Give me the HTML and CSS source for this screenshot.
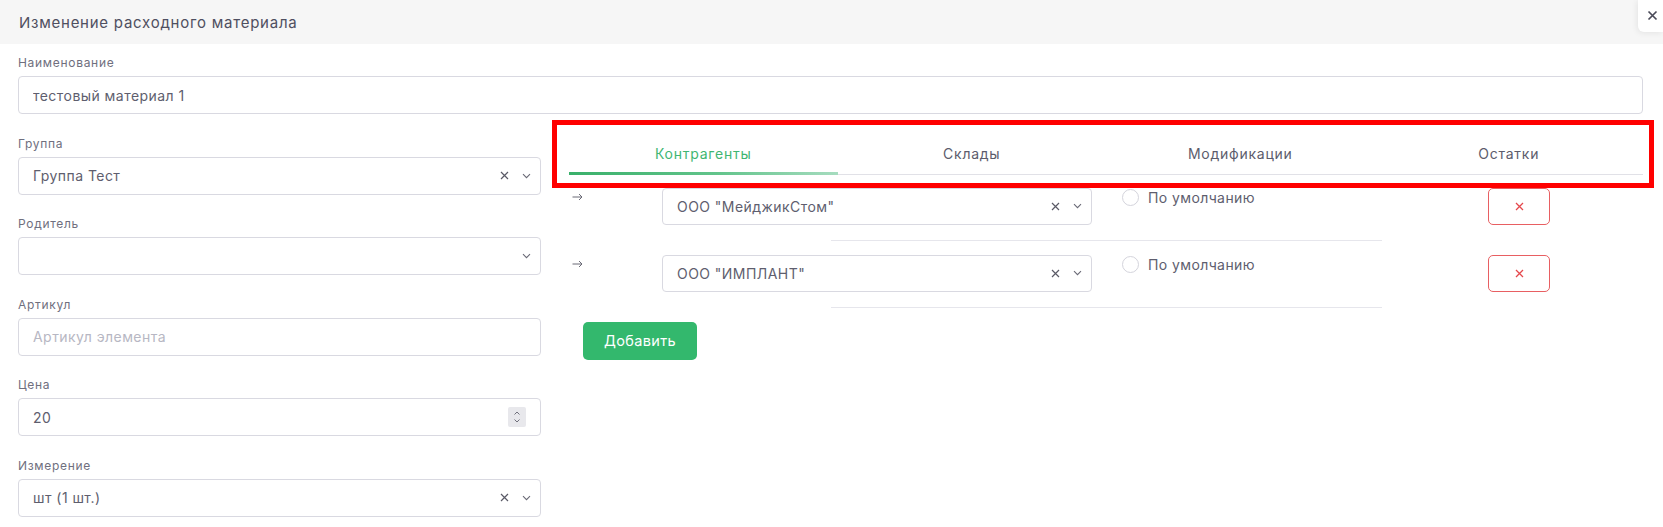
FILE: index.html
```html
<!DOCTYPE html>
<html lang="ru">
<head>
<meta charset="utf-8">
<title>Изменение расходного материала</title>
<link rel="stylesheet" href="styles.css">
</head>
<body>
<div class="modal">
  <header class="modal-head">
    <h1 class="modal-title">Изменение расходного материала</h1>
  </header>
  <button class="modal-close" type="button" aria-label="Закрыть">
    <svg width="11" height="11" viewBox="0 0 11 11"><path d="M1.5 1.5l8 8M9.5 1.5l-8 8" stroke="#4a4a58" stroke-width="1.7" fill="none"/></svg>
  </button>

  <div class="modal-body">
    <div class="field">
      <div class="field-label">Наименование</div>
      <div class="control"><span class="control-value">тестовый материал 1</span></div>
    </div>

    <div class="layout">
      <div class="col-left">
        <div class="field">
          <div class="field-label">Группа</div>
          <div class="control select">
            <span class="control-value">Группа Тест</span>
            <span class="icon-clear"><svg width="9" height="9" viewBox="0 0 9 9"><path d="M1 1l7 7M8 1L1 8" stroke="#5a5a66" stroke-width="1.2" fill="none"/></svg></span>
            <span class="icon-chevron"><svg width="9" height="6" viewBox="0 0 9 6"><path d="M1 1.2l3.5 3.5L8 1.2" stroke="#6a6a76" stroke-width="1.1" fill="none"/></svg></span>
          </div>
        </div>
        <div class="field">
          <div class="field-label">Родитель</div>
          <div class="control select">
            <span class="control-value"></span>
            <span class="icon-chevron"><svg width="9" height="6" viewBox="0 0 9 6"><path d="M1 1.2l3.5 3.5L8 1.2" stroke="#6a6a76" stroke-width="1.1" fill="none"/></svg></span>
          </div>
        </div>
        <div class="field">
          <div class="field-label">Артикул</div>
          <div class="control"><span class="control-value placeholder">Артикул элемента</span></div>
        </div>
        <div class="field">
          <div class="field-label">Цена</div>
          <div class="control">
            <span class="control-value">20</span>
            <span class="spinner">
              <svg width="18" height="20" viewBox="0 0 18 20"><path d="M6.5 7.5l2.5-2.5 2.5 2.5M6.5 12.5l2.5 2.5 2.5-2.5" stroke="#70707c" stroke-width="1" fill="none"/></svg>
            </span>
          </div>
        </div>
        <div class="field">
          <div class="field-label">Измерение</div>
          <div class="control select">
            <span class="control-value">шт (1 шт.)</span>
            <span class="icon-clear"><svg width="9" height="9" viewBox="0 0 9 9"><path d="M1 1l7 7M8 1L1 8" stroke="#5a5a66" stroke-width="1.2" fill="none"/></svg></span>
            <span class="icon-chevron"><svg width="9" height="6" viewBox="0 0 9 6"><path d="M1 1.2l3.5 3.5L8 1.2" stroke="#6a6a76" stroke-width="1.1" fill="none"/></svg></span>
          </div>
        </div>
      </div>

      <div class="col-right">
        <div class="tabs-frame">
          <nav class="tabs">
            <a class="tab is-active">Контрагенты</a>
            <a class="tab">Склады</a>
            <a class="tab">Модификации</a>
            <a class="tab">Остатки</a>
          </nav>
        </div>

        <div class="suppliers">
          <div class="supplier-row">
            <span class="row-arrow"><svg width="11" height="8" viewBox="0 0 11 8"><path d="M0.5 4h9.5M7 1l3 3-3 3" stroke="#6a6a76" stroke-width="1" fill="none"/></svg></span>
            <div class="control select">
              <span class="control-value">ООО "МейджикСтом"</span>
              <span class="icon-clear"><svg width="9" height="9" viewBox="0 0 9 9"><path d="M1 1l7 7M8 1L1 8" stroke="#5a5a66" stroke-width="1.2" fill="none"/></svg></span>
              <span class="icon-chevron"><svg width="9" height="6" viewBox="0 0 9 6"><path d="M1 1.2l3.5 3.5L8 1.2" stroke="#6a6a76" stroke-width="1.1" fill="none"/></svg></span>
            </div>
            <label class="radio"><span class="radio-dot"></span>По умолчанию</label>
            <button class="btn-remove" type="button"><svg width="9" height="9" viewBox="0 0 9 9"><path d="M1 1l7 7M8 1L1 8" stroke="#e5484d" stroke-width="1.3" fill="none"/></svg></button>
          </div>
          <hr class="row-sep">
          <div class="supplier-row">
            <span class="row-arrow"><svg width="11" height="8" viewBox="0 0 11 8"><path d="M0.5 4h9.5M7 1l3 3-3 3" stroke="#6a6a76" stroke-width="1" fill="none"/></svg></span>
            <div class="control select">
              <span class="control-value">ООО "ИМПЛАНТ"</span>
              <span class="icon-clear"><svg width="9" height="9" viewBox="0 0 9 9"><path d="M1 1l7 7M8 1L1 8" stroke="#5a5a66" stroke-width="1.2" fill="none"/></svg></span>
              <span class="icon-chevron"><svg width="9" height="6" viewBox="0 0 9 6"><path d="M1 1.2l3.5 3.5L8 1.2" stroke="#6a6a76" stroke-width="1.1" fill="none"/></svg></span>
            </div>
            <label class="radio"><span class="radio-dot"></span>По умолчанию</label>
            <button class="btn-remove" type="button"><svg width="9" height="9" viewBox="0 0 9 9"><path d="M1 1l7 7M8 1L1 8" stroke="#e5484d" stroke-width="1.3" fill="none"/></svg></button>
          </div>
          <hr class="row-sep">
        </div>

        <button class="btn-add" type="button">Добавить</button>
      </div>
    </div>
  </div>
</div>
</body>
</html>
```

FILE: styles.css
```css
* { box-sizing: border-box; }

html, body {
  margin: 0;
  padding: 0;
  background: #ffffff;
}

body {
  font-family: Inter, "Noto Sans", sans-serif;
  color: #5e5e6e;
}

.modal {
  position: relative;
  width: 1663px;
  min-height: 527px;
  background: #fff;
}

/* header strip */
.modal-head {
  height: 44px;
  background: #f6f6f6;
  display: flex;
  align-items: center;
  padding-left: 19px;
}

.modal-title {
  margin: 0;
  font-size: 15px;
  font-weight: 400;
  letter-spacing: 0.75px;
  color: #4f4f60;
}

.modal-close {
  position: absolute;
  top: 0;
  right: 0;
  width: 25px;
  height: 32px;
  border: 0;
  padding: 0 0 2px 4px;
  background: #fff;
  border-radius: 0 0 0 6px;
  box-shadow: -1px 1px 6px rgba(0, 0, 0, 0.08);
  display: flex;
  align-items: center;
  justify-content: center;
}

.modal-body {
  padding: 11px 20px 0 18px;
}

/* form fields */
.field {
  margin-bottom: 21.5px;
}

.field-label {
  height: 16px;
  line-height: 16px;
  font-size: 12px;
  letter-spacing: 0.7px;
  color: #6f6f7e;
  margin-bottom: 5px;
}

.control {
  height: 38px;
  border: 1px solid #d9d9e1;
  border-radius: 4px;
  background: #fff;
  display: flex;
  align-items: center;
  padding: 0 14px;
  font-size: 14px;
  letter-spacing: 0.45px;
  color: #5e5e6e;
}

.control-value {
  flex: 1;
  white-space: nowrap;
  overflow: hidden;
}

.control-value.placeholder {
  color: #b7b7c3;
}

.control.select {
  padding-right: 9px;
}

.icon-clear,
.icon-chevron {
  display: flex;
  align-items: center;
  justify-content: center;
  width: 10px;
}

.icon-clear {
  margin-right: 12px;
}

.spinner {
  display: flex;
  width: 18px;
  height: 20px;
  background: #e8e8ec;
  border-radius: 2px;
}

/* two-column area */
.layout {
  display: grid;
  grid-template-columns: 523px 1fr;
  column-gap: 28px;
}

/* tabs */
.tabs-frame {
  position: relative;
}

.tabs-frame::before {
  content: "";
  position: absolute;
  left: -17px;
  top: -16px;
  right: -11px;
  bottom: -13px;
  border: 5.5px solid #ff0000;
  pointer-events: none;
}

.tabs {
  display: flex;
  border-bottom: 1px solid #e1e1e7;
}

.tab {
  position: relative;
  flex: 1;
  text-align: center;
  height: 38px;
  padding-top: 8px;
  line-height: 20px;
  font-size: 14px;
  letter-spacing: 0.75px;
  color: #5c5c6c;
}

.tab.is-active {
  color: #3fb672;
}

.tab.is-active::after {
  content: "";
  position: absolute;
  left: 0;
  right: 0;
  bottom: -1px;
  height: 3px;
  background: linear-gradient(90deg, #39b06a 0%, #62c48b 55%, #a6dcbf 100%);
}

/* supplier rows */
.suppliers {
  margin-top: 13px;
}

.supplier-row {
  display: grid;
  grid-template-columns: 93px 430px 1fr 62px;
  padding-right: 93px;
  align-items: start;
}

.supplier-row .control {
  height: 37px;
}

.row-arrow {
  display: flex;
  align-items: center;
  height: 18px;
  padding-left: 3px;
}

.radio {
  display: flex;
  align-items: center;
  gap: 9px;
  padding-left: 30px;
  height: 20px;
  font-size: 14px;
  letter-spacing: 0.4px;
  color: #5e5e6e;
}

.radio-dot {
  width: 17px;
  height: 17px;
  border: 1px solid #d4d4dc;
  border-radius: 50%;
  background: #fff;
  flex: none;
}

.btn-remove {
  height: 37px;
  width: 62px;
  border: 1px solid #e85f62;
  border-radius: 5px;
  background: #fff;
  display: flex;
  align-items: center;
  justify-content: center;
  padding: 0;
}

.row-sep {
  width: 551px;
  margin: 15px auto 14px;
  border: 0;
  border-top: 1px solid #e6e6ec;
  height: 0;
}

.btn-add {
  margin-left: 14px;
  width: 114px;
  height: 38px;
  border: 0;
  border-radius: 5px;
  background: #33b86d;
  color: #fff;
  font-family: Inter, "Noto Sans", sans-serif;
  font-size: 14.5px;
  letter-spacing: 0.35px;
}
```
